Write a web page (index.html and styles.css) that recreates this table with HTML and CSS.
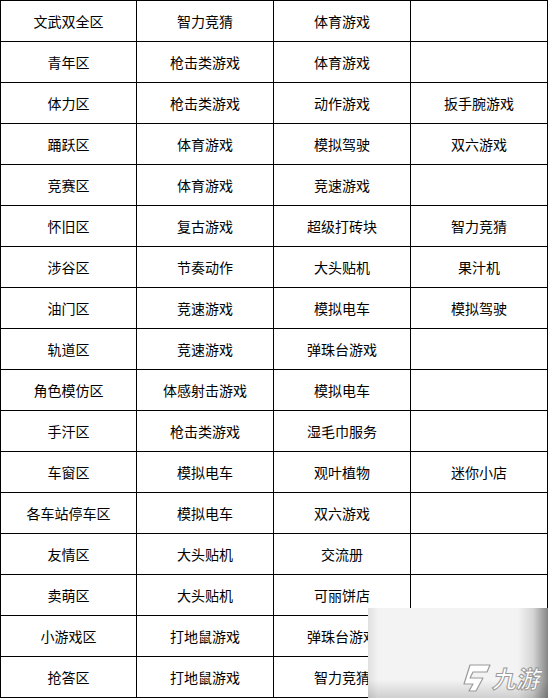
FILE: index.html
```html
<!DOCTYPE html>
<html lang="zh">
<head>
<meta charset="utf-8">
<link rel="stylesheet" href="styles.css">
</head>
<body>
<div class="page">
  <div class="grid">
    <div class="c">文武双全区</div><div class="c">智力竞猜</div><div class="c">体育游戏</div><div class="c"></div>
    <div class="c">青年区</div><div class="c">枪击类游戏</div><div class="c">体育游戏</div><div class="c"></div>
    <div class="c">体力区</div><div class="c">枪击类游戏</div><div class="c">动作游戏</div><div class="c">扳手腕游戏</div>
    <div class="c">踊跃区</div><div class="c">体育游戏</div><div class="c">模拟驾驶</div><div class="c">双六游戏</div>
    <div class="c">竞赛区</div><div class="c">体育游戏</div><div class="c">竞速游戏</div><div class="c"></div>
    <div class="c">怀旧区</div><div class="c">复古游戏</div><div class="c">超级打砖块</div><div class="c">智力竞猜</div>
    <div class="c">涉谷区</div><div class="c">节奏动作</div><div class="c">大头贴机</div><div class="c">果汁机</div>
    <div class="c">油门区</div><div class="c">竞速游戏</div><div class="c">模拟电车</div><div class="c">模拟驾驶</div>
    <div class="c">轨道区</div><div class="c">竞速游戏</div><div class="c">弹珠台游戏</div><div class="c"></div>
    <div class="c">角色模仿区</div><div class="c">体感射击游戏</div><div class="c">模拟电车</div><div class="c"></div>
    <div class="c">手汗区</div><div class="c">枪击类游戏</div><div class="c">湿毛巾服务</div><div class="c"></div>
    <div class="c">车窗区</div><div class="c">模拟电车</div><div class="c">观叶植物</div><div class="c">迷你小店</div>
    <div class="c">各车站停车区</div><div class="c">模拟电车</div><div class="c">双六游戏</div><div class="c"></div>
    <div class="c">友情区</div><div class="c">大头贴机</div><div class="c">交流册</div><div class="c"></div>
    <div class="c">卖萌区</div><div class="c">大头贴机</div><div class="c">可丽饼店</div><div class="c"></div>
    <div class="c">小游戏区</div><div class="c">打地鼠游戏</div><div class="c">弹珠台游戏</div><div class="c"></div>
    <div class="c">抢答区</div><div class="c">打地鼠游戏</div><div class="c">智力竞猜</div><div class="c"></div>
  </div>
  <div class="watermark">
    <svg class="wm-icon" width="30" height="28" viewBox="0 0 30 28">
      <path d="M9 1 H29 L26 8 H12 L9 14 H22 L15 27 H8 L12 20 H3 Z" fill="#fff" stroke="#9a9a9a" stroke-width="1.2" stroke-linejoin="round"/>
    </svg>
    <span class="wm-text">九游</span>
  </div>
</div>
</body>
</html>
```
FILE: styles.css
```css
html, body {
  margin: 0;
  padding: 0;
  background: #fff;
}
.page {
  position: relative;
  width: 548px;
  height: 698px;
  overflow: hidden;
}
.grid {
  display: grid;
  grid-template-columns: 135px 136px 136px 136px;
  grid-auto-rows: 40px;
  gap: 1px;
  padding: 1px;
  background: #000;
  width: 548px;
  height: 698px;
  box-sizing: border-box;
}
.c {
  background: #fff;
  display: flex;
  align-items: center;
  justify-content: center;
  font-family: "Noto Sans CJK SC", "Noto Sans", sans-serif;
  font-size: 14px;
  color: #000;
}
.watermark {
  position: absolute;
  left: 368px;
  top: 608px;
  width: 180px;
  height: 90px;
  background:
    linear-gradient(to right, rgba(0,0,0,0.08) 0px, rgba(0,0,0,0) 10px, rgba(0,0,0,0) 150px, rgba(0,0,0,0.12) 165px, rgba(0,0,0,0.45) 180px),
    linear-gradient(to bottom, rgba(0,0,0,0) 0px, rgba(0,0,0,0) 72px, rgba(0,0,0,0.15) 90px),
    #f3f3f3;
  display: flex;
  align-items: flex-end;
  justify-content: flex-end;
  gap: 3px;
  padding: 0 6px 6px 0;
  box-sizing: border-box;
}
.wm-icon {
  display: block;
  margin-bottom: 0;
}
.wm-text {
  display: block;
  font-family: "Noto Sans CJK SC", sans-serif;
  font-size: 24px;
  line-height: 28px;
  font-weight: 700;
  color: #fff;
  -webkit-text-stroke: 1px #9a9a9a;
  transform: skewX(-12deg);
  white-space: nowrap;
}
```
